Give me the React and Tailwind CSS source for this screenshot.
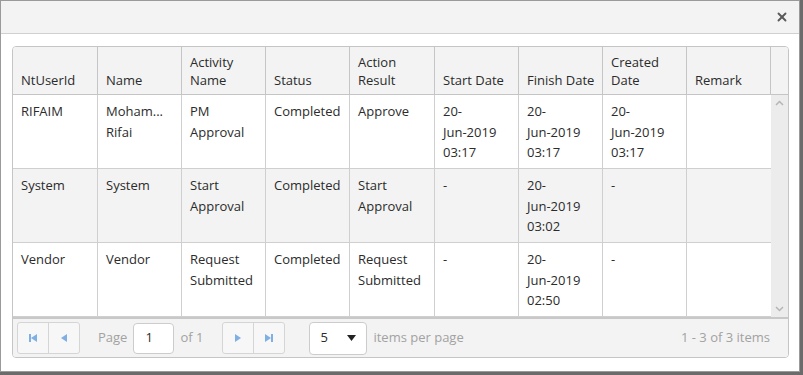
import { X } from "lucide-react";

const cols = [
  { key: "id", title: ["NtUserId"], w: "w-[85px]" },
  { key: "name", title: ["Name"], w: "w-[84px]" },
  { key: "act", title: ["Activity", "Name"], w: "w-[84px]" },
  { key: "status", title: ["Status"], w: "w-[84px]" },
  { key: "result", title: ["Action", "Result"], w: "w-[85px]" },
  { key: "start", title: ["Start Date"], w: "w-[84px]" },
  { key: "finish", title: ["Finish Date"], w: "w-[84px]" },
  { key: "created", title: ["Created", "Date"], w: "w-[84px]" },
  { key: "remark", title: ["Remark"], w: "w-[84px]" },
];

const rows = [
  {
    id: ["RIFAIM"],
    name: ["Moham...", "Rifai"],
    act: ["PM", "Approval"],
    status: ["Completed"],
    result: ["Approve"],
    start: ["20-", "Jun-2019", "03:17"],
    finish: ["20-", "Jun-2019", "03:17"],
    created: ["20-", "Jun-2019", "03:17"],
    remark: [],
  },
  {
    id: ["System"],
    name: ["System"],
    act: ["Start", "Approval"],
    status: ["Completed"],
    result: ["Start", "Approval"],
    start: ["-"],
    finish: ["20-", "Jun-2019", "03:02"],
    created: ["-"],
    remark: [],
  },
  {
    id: ["Vendor"],
    name: ["Vendor"],
    act: ["Request", "Submitted"],
    status: ["Completed"],
    result: ["Request", "Submitted"],
    start: ["-"],
    finish: ["20-", "Jun-2019", "02:50"],
    created: ["-"],
    remark: [],
  },
];

function Tri({ dir }) {
  return (
    <svg width="8" height="10" viewBox="0 0 8 10">
      {dir === "left" ? (
        <path d="M7 1 L1 5 L7 9 Z" fill="#7fb0e4" />
      ) : (
        <path d="M1 1 L7 5 L1 9 Z" fill="#7fb0e4" />
      )}
    </svg>
  );
}

function First() {
  return (
    <svg width="10" height="10" viewBox="0 0 10 10">
      <rect x="1" y="1" width="2" height="8" fill="#7fb0e4" />
      <path d="M9 1 L3 5 L9 9 Z" fill="#7fb0e4" />
    </svg>
  );
}

function Last() {
  return (
    <svg width="10" height="10" viewBox="0 0 10 10">
      <path d="M1 1 L7 5 L1 9 Z" fill="#7fb0e4" />
      <rect x="7" y="1" width="2" height="8" fill="#7fb0e4" />
    </svg>
  );
}

export default function App() {
  return (
    <div
      className="w-[803px] h-[375px] bg-[#6b6b6b] overflow-hidden"
      style={{ fontFamily: '"Open Sans", "Liberation Sans", sans-serif' }}
    >
      <div className="w-[800px] h-[372px] bg-white border border-[#9a9a9a] flex flex-col">
        {/* Title bar */}
        <div className="h-[33px] bg-[#f3f3f3] border-b border-[#d0d0d0] flex items-center justify-end pr-[10px] shrink-0">
          <X size={14} strokeWidth={3.2} className="text-[#5a5a5a]" />
        </div>

        {/* Grid */}
        <div className="mt-[12px] ml-[11px] w-[777px] h-[312px] border border-[#c5c5c5] rounded-[4px] overflow-hidden flex flex-col text-[13px] text-[#2b2b2b]">
          {/* Header */}
          <div className="flex h-[48px] bg-[#f3f3f3] border-b border-[#c5c5c5] shrink-0">
            {cols.map((c) => (
              <div
                key={c.key}
                className={`${c.w} shrink-0 border-r border-[#c5c5c5] flex flex-col justify-end pl-[8px] pb-[5px] leading-[18px] whitespace-nowrap overflow-hidden`}
              >
                {c.title.map((t) => (
                  <div key={t}>{t}</div>
                ))}
              </div>
            ))}
            <div className="flex-1" />
          </div>

          {/* Body */}
          <div className="flex h-[222px] shrink-0">
            <div className="w-[758px] flex flex-col">
              {rows.map((r, i) => (
                <div
                  key={i}
                  className={`flex h-[74px] border-b border-[#cfcfcf] ${
                    i === 1 ? "bg-[#f3f3f3]" : "bg-white"
                  }`}
                >
                  {cols.map((c) => (
                    <div
                      key={c.key}
                      className={`${c.w} shrink-0 ${
                        c.key === "remark" ? "" : "border-r border-[#cfcfcf]"
                      } px-[8px] pt-[6px] leading-[20.5px] whitespace-nowrap`}
                    >
                      {r[c.key].map((t, j) => (
                        <div key={j}>{t}</div>
                      ))}
                    </div>
                  ))}
                </div>
              ))}
            </div>
            <div className="flex-1 bg-[#ececec] flex flex-col items-center justify-between py-[5px]">
              <svg width="9" height="6" viewBox="0 0 9 6">
                <path d="M1 5 L4.5 1.5 L8 5" stroke="#b5b5b5" strokeWidth="1.5" fill="none" />
              </svg>
              <svg width="9" height="6" viewBox="0 0 9 6">
                <path d="M1 1 L4.5 4.5 L8 1" stroke="#b5b5b5" strokeWidth="1.5" fill="none" />
              </svg>
            </div>
          </div>

          {/* Pager */}
          <div className="flex-1 bg-[#f3f3f3] border-t-2 border-[#c8c8c8] flex items-center pl-[4px] pr-[18px] text-[#a2a2a2]">
            <div className="flex h-[32px] border border-[#d5d5d5] rounded-[3px] bg-[#f7f7f7]">
              <div className="w-[31px] flex items-center justify-center border-r border-[#d5d5d5]">
                <First />
              </div>
              <div className="w-[30px] flex items-center justify-center">
                <Tri dir="left" />
              </div>
            </div>
            <span className="ml-[18px]">Page</span>
            <div className="ml-[6px] w-[41px] h-[31px] bg-white border border-[#ccc] rounded-[4px] flex items-center pl-[11px] text-[#2b2b2b]">
              1
            </div>
            <span className="ml-[6px]">of 1</span>
            <div className="ml-[19px] flex h-[32px] border border-[#d5d5d5] rounded-[3px] bg-[#f7f7f7]">
              <div className="w-[31px] flex items-center justify-center border-r border-[#d5d5d5]">
                <Tri dir="right" />
              </div>
              <div className="w-[30px] flex items-center justify-center">
                <Last />
              </div>
            </div>
            <div className="ml-[24px] w-[58px] h-[33px] bg-white border border-[#ccc] rounded-[4px] flex items-center justify-between pl-[10px] pr-[10px] text-[#2b2b2b]">
              <span>5</span>
              <svg width="9" height="6" viewBox="0 0 9 6">
                <path d="M0 0 L9 0 L4.5 6 Z" fill="#222" />
              </svg>
            </div>
            <span className="ml-[6px]">items per page</span>
            <span className="ml-auto">1 - 3 of 3 items</span>
          </div>
        </div>
      </div>
    </div>
  );
}
